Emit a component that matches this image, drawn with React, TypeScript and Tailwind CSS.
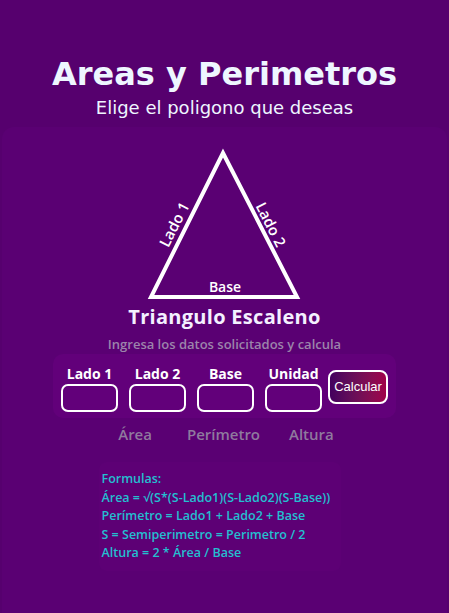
export default function App() {
  const fields = ["Lado 1", "Lado 2", "Base", "Unidad"];
  return (
    <div className="w-[449px] h-[613px] bg-[#56006e] overflow-hidden flex flex-col items-center" style={{ fontFamily: "'Open Sans', sans-serif" }}>
      <h1 className="mt-[53px] text-[32px] leading-[42px] font-bold text-[#eef6ff] font-['DejaVu_Sans',sans-serif]">Areas y Perimetros</h1>
      <p className="mt-[1px] text-[18px] leading-[24px] text-[#eef6ff] font-['DejaVu_Sans',sans-serif]">Elige el poligono que deseas</p>

      <div className="mt-[7px] w-[445px] flex-1 rounded-t-[12px] bg-[#5a0073] flex flex-col items-center">
        <svg width="200" height="180" viewBox="0 0 200 180" className="mt-[14px]">
          <polygon points="98,12 26,156 172,156" fill="none" stroke="white" strokeWidth="4" strokeLinejoin="miter" />
          <text x="0" y="0" transform="translate(54,86) rotate(-63)" fill="white" fontSize="15" fontWeight="600" textAnchor="middle" fontFamily="Open Sans, sans-serif">Lado 1</text>
          <text x="0" y="0" transform="translate(141,86) rotate(63)" fill="white" fontSize="15" fontWeight="600" textAnchor="middle" fontFamily="Open Sans, sans-serif">Lado 2</text>
          <text x="100" y="151" fill="white" fontSize="14" fontWeight="600" textAnchor="middle" fontFamily="Open Sans, sans-serif">Base</text>
        </svg>
        <h2 className="-mt-[17px] text-[20px] leading-[26px] font-bold tracking-[0.3px] text-[#f4f0ff]">Triangulo Escaleno</h2>
        <p className="mt-[5px] text-[13px] leading-[18px] font-semibold text-[#9c84ab]">Ingresa los datos solicitados y calcula</p>

        <div className="mt-[1px] w-[343px] h-[64px] rounded-[10px] bg-[#62007a] flex items-start pt-[11px] pl-[8px] gap-[11px]">
          {fields.map((f) => (
            <div key={f} className="flex flex-col items-center">
              <span className="text-[14px] leading-[18px] font-bold text-white">{f}</span>
              <div className="mt-[1px] w-[57px] h-[28px] rounded-[7px] border-2 border-white" />
            </div>
          ))}
          <button className="-ml-[5px] mt-[5px] w-[60px] h-[34px] rounded-[8px] border-2 border-white bg-gradient-to-r from-[#44005e] to-[#a0004a] text-white text-[13px] font-['Liberation_Sans',sans-serif]">Calcular</button>
        </div>

        <div className="mt-[5px] flex text-[15px] leading-[22px] font-semibold text-[#8f7a9e]">
          <span className="ml-[3px]">Área</span>
          <span className="ml-[35px]">Perímetro</span>
          <span className="ml-[29px]">Altura</span>
        </div>

        <div className="mt-[17px] ml-[-10px] w-[242px] rounded-[8px] bg-[#5d0075] px-[3px] py-[8px] text-[12.5px] leading-[18.5px] font-semibold text-[#24bfd0] whitespace-nowrap">
          <p>Formulas:</p>
          <p>Área = √(S*(S-Lado1)(S-Lado2)(S-Base))</p>
          <p>Perímetro = Lado1 + Lado2 + Base</p>
          <p>S = Semiperimetro = Perimetro / 2</p>
          <p>Altura = 2 * Área / Base</p>
        </div>
      </div>
    </div>
  );
}
